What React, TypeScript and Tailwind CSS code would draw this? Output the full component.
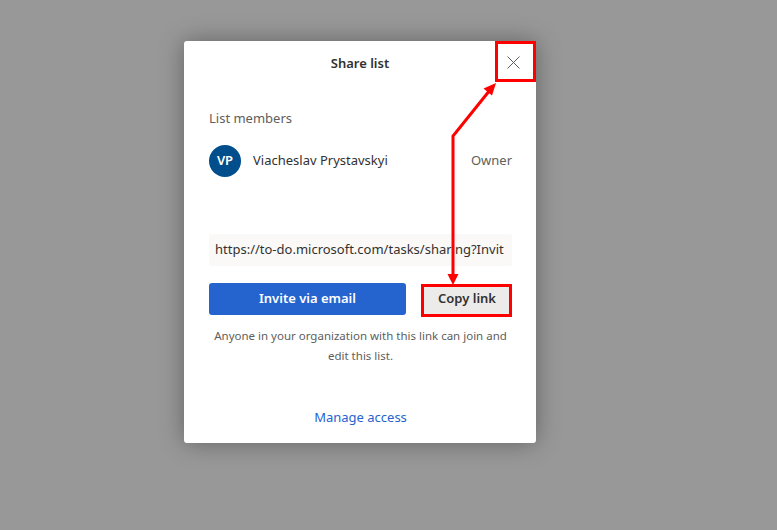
import React from 'react'

const font = { fontFamily: '"Segoe UI", "Noto Sans", sans-serif' }

function Annotations() {
  return (
    <svg className="pointer-events-none absolute left-0 top-0" width="777" height="530">
      <rect x="496.5" y="42.5" width="38" height="38" fill="none" stroke="#ff0000" strokeWidth="3" />
      <rect x="422.5" y="285.5" width="88" height="30" fill="none" stroke="#ff0000" strokeWidth="3" />
      <polyline points="453,276 453,136 490,90" fill="none" stroke="#ff0000" strokeWidth="3" />
      <polygon points="453,285 447.5,274 458.5,274" fill="#ff0000" />
      <polygon points="496,83 483.5,88.5 492,95.5" fill="#ff0000" />
    </svg>
  )
}

export default function App() {
  return (
    <div className="relative h-[530px] w-[777px] overflow-hidden bg-[#989898]" style={font}>
      <div className="ml-[184px] pt-[41px]">
        <div className="h-[402px] w-[352px] rounded-[3px] bg-white shadow-[0_0_24px_rgba(0,0,0,0.35)]">
          {/* Header */}
          <div className="relative flex h-[46px] items-center justify-center">
            <span className="text-[13px] font-semibold text-[#323130]">Share list</span>
            <button className="absolute right-[4px] top-[2px] flex h-[38px] w-[38px] items-center justify-center">
              <svg width="13" height="13" viewBox="0 0 13 13">
                <path d="M0.5 0.5 L12.5 12.5 M12.5 0.5 L0.5 12.5" stroke="#605e5c" strokeWidth="1" />
              </svg>
            </button>
          </div>

          <div className="pl-[25px] pr-[24px]">
            <div className="mt-[21px] text-[13px] leading-[20px] text-[#605e5c]">List members</div>

            <div className="mt-[17px] flex h-[32px] items-center">
              <div className="flex h-[32px] w-[32px] items-center justify-center rounded-full bg-[#004e8c] text-[13px] font-semibold text-white">
                VP
              </div>
              <span className="ml-[12px] flex-1 text-[13px] text-[#323130]">Viacheslav Prystavskyi</span>
              <span className="text-[13px] text-[#605e5c]">Owner</span>
            </div>

            <div className="mt-[57px] flex h-[32px] items-center overflow-hidden rounded-[2px] bg-[#faf9f8] pl-[6px]">
              <span className="whitespace-nowrap text-[13px] text-[#323130]">
                https://to-do.microsoft.com/tasks/sharing?Invit
              </span>
            </div>

            <div className="mt-[17px] flex h-[32px] items-center justify-between">
              <button className="flex h-[32px] w-[197px] items-center justify-center rounded-[3px] bg-[#2564cf] text-[13px] font-semibold text-white">
                Invite via email
              </button>
              <button className="flex h-[30px] w-[90px] items-center justify-center rounded-[2px] bg-[#edebe9] text-[13px] font-semibold text-[#323130]">
                Copy link
              </button>
            </div>

            <p className="mt-[11px] text-center text-[11.5px] leading-[20px] text-[#605e5c]">
              Anyone in your organization with this link can join and edit this list.
            </p>

            <div className="mt-[41px] text-center text-[13px] leading-[20px] text-[#2564cf]">Manage access</div>
          </div>
        </div>
      </div>
      <Annotations />
    </div>
  )
}
